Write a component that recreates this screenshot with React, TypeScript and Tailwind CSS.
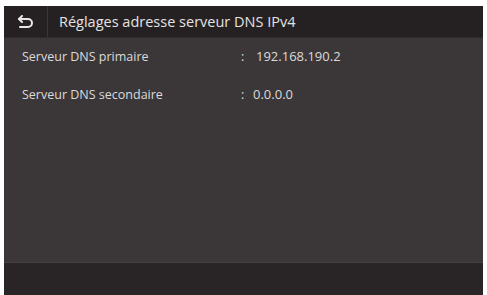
import React from "react";

export default function App() {
  return (
    <div className="w-[487px] h-[295px] bg-white pt-[6px] pl-[4px] pr-[4px] overflow-hidden" style={{ fontFamily: '"Open Sans", "Noto Sans", sans-serif' }}>
      <div className="w-full h-full flex flex-col bg-[#3b3738]">
        <div className="h-[32px] flex items-center bg-[#252122] border-b border-[#2e2a2b]">
          <div className="w-[44px] h-full flex items-center justify-center border-r border-[#3a3637]">
            <svg width="18" height="14" viewBox="0 0 18 14" fill="none" stroke="#e8e6e6" strokeWidth="2" strokeLinecap="round" strokeLinejoin="round">
              <path d="M5 1 L2 4 L5 7" />
              <path d="M2 4 H11 A4 4 0 0 1 11 12 H3" />
            </svg>
          </div>
          <div className="pl-[11px] text-[14.5px] text-[#e4e2e2]">Réglages adresse serveur DNS IPv4</div>
        </div>
        <div className="flex-1 flex flex-col pt-[6px]">
          <div className="flex items-center h-[26px] text-[12.5px] text-[#dcdada]">
            <div className="w-[237px] pl-[18px]">Serveur DNS primaire</div>
            <div className="w-[15px]">:</div>
            <div className="text-[13px]">192.168.190.2</div>
          </div>
          <div className="flex items-center h-[26px] mt-[12px] text-[12.5px] text-[#dcdada]">
            <div className="w-[237px] pl-[18px]">Serveur DNS secondaire</div>
            <div className="w-[12px]">:</div>
            <div className="text-[13px]">0.0.0.0</div>
          </div>
        </div>
        <div className="h-[33px] bg-[#292526] border-t border-[#46423f]" />
      </div>
    </div>
  );
}
